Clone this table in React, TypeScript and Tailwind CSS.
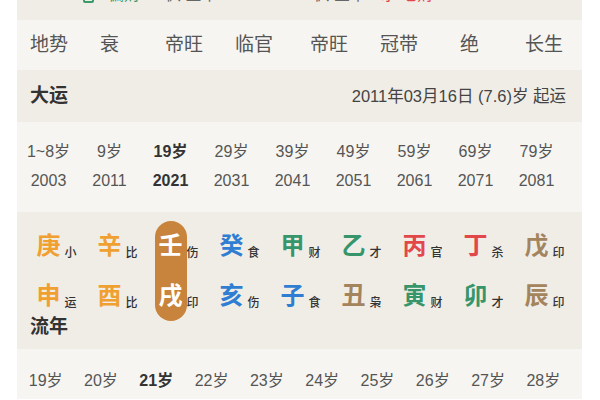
import React from "react";

const F = { fontFamily: '"Liberation Sans", "Noto Sans CJK SC", sans-serif' };

const dishi = ["地势", "衰", "帝旺", "临官", "帝旺", "冠带", "绝", "长生"];
const dyAges = ["1~8岁", "9岁", "19岁", "29岁", "39岁", "49岁", "59岁", "69岁", "79岁"];
const dyYears = ["2003", "2011", "2021", "2031", "2041", "2051", "2061", "2071", "2081"];
const lnAges = ["19岁", "20岁", "21岁", "22岁", "23岁", "24岁", "25岁", "26岁", "27岁", "28岁"];

const ORANGE = "text-[#f0a030]";
const BLUE = "text-[#2f7ed2]";
const GREEN = "text-[#36956a]";
const RED = "text-[#e2484a]";
const BROWN = "text-[#a3845d]";

type Cell = { c: string; s: string; col: string };
const cols: { top: Cell; bot: Cell; active?: boolean }[] = [
  { top: { c: "庚", s: "小", col: ORANGE }, bot: { c: "申", s: "运", col: ORANGE } },
  { top: { c: "辛", s: "比", col: ORANGE }, bot: { c: "酉", s: "比", col: ORANGE } },
  { top: { c: "壬", s: "伤", col: "text-white" }, bot: { c: "戌", s: "印", col: "text-white" }, active: true },
  { top: { c: "癸", s: "食", col: BLUE }, bot: { c: "亥", s: "伤", col: BLUE } },
  { top: { c: "甲", s: "财", col: GREEN }, bot: { c: "子", s: "食", col: BLUE } },
  { top: { c: "乙", s: "才", col: GREEN }, bot: { c: "丑", s: "枭", col: BROWN } },
  { top: { c: "丙", s: "官", col: RED }, bot: { c: "寅", s: "财", col: GREEN } },
  { top: { c: "丁", s: "杀", col: RED }, bot: { c: "卯", s: "才", col: GREEN } },
  { top: { c: "戊", s: "印", col: BROWN }, bot: { c: "辰", s: "印", col: BROWN } },
];

function GZ({ cell }: { cell: Cell }) {
  return (
    <div className="h-[50px] flex items-center justify-center">
      <span className={`relative text-[24px] leading-none font-bold ${cell.col}`}>
        {cell.c}
        <span className="absolute left-full ml-[4px] bottom-[-1px] text-[12px] leading-none font-medium text-[#333] whitespace-nowrap">
          {cell.s}
        </span>
      </span>
    </div>
  );
}

export default function App() {
  return (
    <div className="w-[600px] h-[400px] bg-white overflow-hidden" style={F}>
      <div className="ml-[17px] w-[565px] bg-[#f6f5f1]">
        {/* cut-off top row */}
        <div className="h-[20px] bg-[#f0ede7] overflow-hidden relative">
          <div className="flex items-end h-[20px] -mt-[17px] text-[16px] leading-none">
            <span className="ml-[66px] w-[11px] h-[11px] border-2 border-[#3a9a6a] rounded-[2px]" />
            <span className="ml-[14px] text-[#3a9a6a]">偏财</span>
            <span className="ml-[25px] text-[#666]">枫 金木</span>
            <span className="ml-[96px] text-[#666]">枫 金木</span>
            <span className="ml-[15px] text-[#e2484a]">水 七财</span>
          </div>
        </div>

        {/* 地势 row */}
        <div className="h-[50px] grid grid-cols-[70px_65px_70px_75px_70px_80px_65px_1fr] items-center pl-[13px] text-[19px] text-[#555]">
          {dishi.map((d, i) => (
            <span key={i}>{d}</span>
          ))}
        </div>

        {/* 大运 header */}
        <div className="h-[52px] bg-[#f0ede7] flex items-center justify-between pl-[13px] pr-[16px]">
          <span className="text-[19px] font-bold text-[#333]">大运</span>
          <span className="text-[16.5px] text-[#444]">2011年03月16日 (7.6)岁 起运</span>
        </div>

        {/* 大运 ages/years */}
        <div className="pl-[1px] pt-[15px] pb-[17px]">
          <div className="grid grid-cols-9 w-[549px] text-[16px] leading-[29px] text-[#555] text-center">
            {dyAges.map((a, i) => (
              <span key={i} className={i === 2 ? "font-bold text-[#333]" : ""}>{a}</span>
            ))}
            {dyYears.map((a, i) => (
              <span key={i} className={i === 2 ? "font-bold text-[#333]" : ""}>{a}</span>
            ))}
          </div>
        </div>

        {/* ganzhi section */}
        <div className="bg-[#f0ede7] pt-[9px] pb-[12px]">
          <div className="grid grid-cols-9 w-[549px] ml-[1px]">
            {cols.map((c, i) => (
              <div key={i} className="flex justify-center">
                <div className={c.active ? "w-[32px] rounded-full bg-[#c8843c] flex flex-col items-center" : "flex flex-col items-center"}>
                  <GZ cell={c.top} />
                  <GZ cell={c.bot} />
                </div>
              </div>
            ))}
          </div>
          <div className="-mt-[4px] pl-[13px] text-[19px] leading-[20px] font-bold text-[#333]">流年</div>
        </div>

        {/* 流年 ages */}
        <div className="pl-[1px] pt-[21px] h-[50px]">
          <div className="grid grid-cols-10 w-[553px] text-[16px] leading-[22px] text-[#555] text-center">
            {lnAges.map((a, i) => (
              <span key={i} className={i === 2 ? "font-bold text-[#333]" : ""}>{a}</span>
            ))}
          </div>
        </div>
      </div>
    </div>
  );
}
